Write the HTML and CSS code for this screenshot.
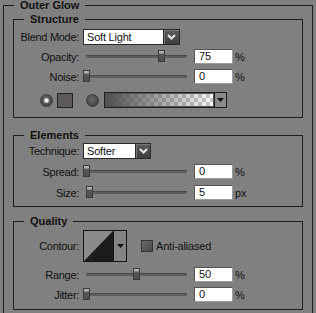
FILE: index.html
```html
<!DOCTYPE html>
<html>
<head>
<meta charset="utf-8">
<link rel="stylesheet" href="styles.css">
</head>
<body>
<fieldset class="group outer">
  <legend class="title outer-title">Outer Glow</legend>

  <fieldset class="group sub structure">
    <legend class="title sub-title">Structure</legend>
    <div class="row row-blend">
      <span class="label">Blend Mode:</span>
      <div class="select select-blend">
        <span class="select-field">Soft Light</span>
        <span class="select-btn"><svg width="9" height="6" viewBox="0 0 9 6"><path d="M1 1 L4.5 4.5 L8 1" fill="none" stroke="#e6e6e6" stroke-width="2"/></svg></span>
      </div>
    </div>
    <div class="row row-opacity">
      <span class="label">Opacity:</span>
      <div class="slider"><div class="track"></div><div class="thumb" style="left:75px"></div></div>
      <span class="num">75</span><span class="unit">%</span>
    </div>
    <div class="row row-noise">
      <span class="label">Noise:</span>
      <div class="slider"><div class="track"></div><div class="thumb" style="left:0px"></div></div>
      <span class="num">0</span><span class="unit">%</span>
    </div>
    <div class="row row-color">
      <span class="radio radio-on"><span class="dot"></span></span>
      <span class="swatch"></span>
      <span class="radio radio-off"></span>
      <div class="gradient">
        <span class="gradient-field"></span>
        <span class="gradient-btn"><svg width="7" height="4" viewBox="0 0 7 4"><path d="M0 0 H7 L3.5 4 Z" fill="#111"/></svg></span>
      </div>
    </div>
  </fieldset>

  <fieldset class="group sub elements">
    <legend class="title sub-title">Elements</legend>
    <div class="row row-technique">
      <span class="label">Technique:</span>
      <div class="select select-technique">
        <span class="select-field">Softer</span>
        <span class="select-btn"><svg width="9" height="6" viewBox="0 0 9 6"><path d="M1 1 L4.5 4.5 L8 1" fill="none" stroke="#e6e6e6" stroke-width="2"/></svg></span>
      </div>
    </div>
    <div class="row row-spread">
      <span class="label">Spread:</span>
      <div class="slider"><div class="track"></div><div class="thumb" style="left:0px"></div></div>
      <span class="num">0</span><span class="unit">%</span>
    </div>
    <div class="row row-size">
      <span class="label">Size:</span>
      <div class="slider"><div class="track"></div><div class="thumb" style="left:3px"></div></div>
      <span class="num">5</span><span class="unit">px</span>
    </div>
  </fieldset>

  <fieldset class="group sub quality">
    <legend class="title sub-title">Quality</legend>
    <div class="row row-contour">
      <span class="label">Contour:</span>
      <div class="contour">
        <span class="contour-preview"><svg width="29" height="30" viewBox="0 0 29 30"><rect width="29" height="30" fill="#8b8b8b"/><path d="M0 30 L29 0 L29 30 Z" fill="#1c1c1c"/></svg></span>
        <span class="contour-btn"><svg width="7" height="4" viewBox="0 0 7 4"><path d="M0 0 H7 L3.5 4 Z" fill="#111"/></svg></span>
      </div>
      <span class="checkbox"></span>
      <span class="check-label">Anti-aliased</span>
    </div>
    <div class="row row-range">
      <span class="label">Range:</span>
      <div class="slider"><div class="track"></div><div class="thumb" style="left:50px"></div></div>
      <span class="num">50</span><span class="unit">%</span>
    </div>
    <div class="row row-jitter">
      <span class="label">Jitter:</span>
      <div class="slider"><div class="track"></div><div class="thumb" style="left:0px"></div></div>
      <span class="num">0</span><span class="unit">%</span>
    </div>
  </fieldset>
</fieldset>
</body>
</html>
```

FILE: styles.css
```css
html, body {
  margin: 0;
  padding: 0;
  overflow: hidden;
  background: #808080;
}
body {
  font-family: "Liberation Sans", Arial, sans-serif;
  font-size: 11px;
  color: #111;
}
.group {
  border: 1px solid #1e1e1e;
  margin: 0;
  min-width: 0;
  box-sizing: border-box;
}
.outer {
  margin-left: 3px;
  width: 310px;
  padding: 3px 9px 12px 9px;
}
.sub {
  width: 290px;
  padding: 0;
}
.title {
  font-weight: bold;
  font-size: 11px;
  line-height: 11px;
  padding: 0 6px;
  color: #111;
}
.outer-title { margin-left: 1px; }
.sub-title { margin-left: 10px; }

.structure { padding: 4px 0 9px 0; }
.elements { margin-top: 12px; padding: 2px 0 6px 0; }
.quality { margin-top: 9px; padding: 3px 0 7px 0; }

.row {
  display: flex;
  align-items: center;
}
.label {
  width: 65px;
  text-align: right;
  margin-right: 4px;
  letter-spacing: -0.3px;
  white-space: nowrap;
}
.row-blend { height: 16px; }
.row-opacity { height: 15px; margin-top: 4px; }
.row-noise { height: 15px; margin-top: 5px; }
.row-color { height: 16px; margin-top: 8px; }
.row-technique { height: 16px; }
.row-spread { height: 15px; margin-top: 5px; }
.row-size { height: 15px; margin-top: 6px; }
.row-contour { height: 32px; }
.row-range { height: 15px; margin-top: 5px; }
.row-jitter { height: 15px; margin-top: 5px; }

/* dropdown */
.select {
  display: flex;
  height: 16px;
  box-sizing: border-box;
}
.select-field {
  background: #fff;
  border: 1px solid #2a2a2a;
  border-right: none;
  box-sizing: border-box;
  height: 16px;
  line-height: 14px;
  padding-left: 3px;
  letter-spacing: -0.2px;
}
.select-blend .select-field { width: 80px; }
.select-technique .select-field { width: 52px; }
.select-btn {
  width: 17px;
  height: 16px;
  box-sizing: border-box;
  border: 1px solid #2a2a2a;
  background: linear-gradient(#5c5c5c, #3e3e3e);
  box-shadow: inset 1px 1px 0 #777;
  display: flex;
  align-items: center;
  justify-content: center;
}
.select-technique .select-btn { width: 16px; }

/* slider */
.slider {
  position: relative;
  width: 104px;
  height: 15px;
}
.track {
  position: absolute;
  left: 3px;
  right: 0;
  top: 6px;
  height: 3px;
  background: #5e5e5e;
  border-top: 1px solid #4a4a4a;
  box-sizing: border-box;
}
.thumb {
  position: absolute;
  top: 1px;
  width: 7px;
  height: 12px;
  box-sizing: border-box;
  border: 1px solid #3a3a3a;
  background: linear-gradient(#b0b0b0 0, #b0b0b0 2px, #5a5a5a 3px, #4e4e4e 100%);
}

/* numeric input */
.num {
  margin-left: 7px;
  width: 39px;
  height: 15px;
  box-sizing: border-box;
  background: #fff;
  border: 1px solid #9a9a9a;
  border-top-color: #555;
  border-left-color: #555;
  line-height: 13px;
  padding-left: 4px;
}
.unit {
  margin-left: 2px;
  letter-spacing: -0.2px;
}

/* colour row */
.radio {
  width: 13px;
  height: 13px;
  border-radius: 50%;
  box-sizing: border-box;
  background: radial-gradient(circle at 45% 40%, #6a6a6a, #484848 70%, #363636);
  border: 1px solid #3a3a3a;
  display: flex;
  align-items: center;
  justify-content: center;
}
.radio-on { margin-left: 26px; }
.radio-on .dot {
  width: 3px;
  height: 3px;
  border-radius: 50%;
  background: #fff;
  box-shadow: 0 0 1px 1px rgba(230,230,230,0.8);
}
.radio-off { margin-left: 13px; }
.swatch {
  margin-left: 4px;
  width: 16px;
  height: 15px;
  box-sizing: border-box;
  border: 1px solid #222;
  background: #5e5a5a;
}
.gradient {
  margin-left: 5px;
  display: flex;
  height: 16px;
  box-sizing: border-box;
  border: 1px solid #1e1e1e;
}
.gradient-field {
  width: 109px;
  height: 14px;
  border: 1px solid #555;
  box-sizing: border-box;
  background:
    linear-gradient(to right, rgba(80,80,80,1), rgba(80,80,80,0)),
    repeating-conic-gradient(#c8c8c8 0 25%, #fafafa 0 50%) 0 0 / 8px 8px;
}
.gradient-btn {
  width: 11px;
  height: 14px;
  border-left: 1px solid #1e1e1e;
  background: #8a8a8a;
  display: flex;
  align-items: center;
  justify-content: center;
}

/* contour */
.contour {
  display: flex;
  height: 32px;
  box-sizing: border-box;
  border: 1px solid #141414;
}
.contour-preview {
  width: 29px;
  height: 30px;
  display: block;
}
.contour-preview svg { display: block; }
.contour-btn {
  width: 12px;
  height: 30px;
  border-left: 1px solid #141414;
  background: #838383;
  display: flex;
  align-items: center;
  justify-content: center;
}
.checkbox {
  margin-left: 14px;
  width: 12px;
  height: 12px;
  box-sizing: border-box;
  border: 1px solid #333;
  background: linear-gradient(135deg, #6a6a6a, #4a4a4a);
}
.check-label {
  margin-left: 3px;
  letter-spacing: -0.2px;
}
```
